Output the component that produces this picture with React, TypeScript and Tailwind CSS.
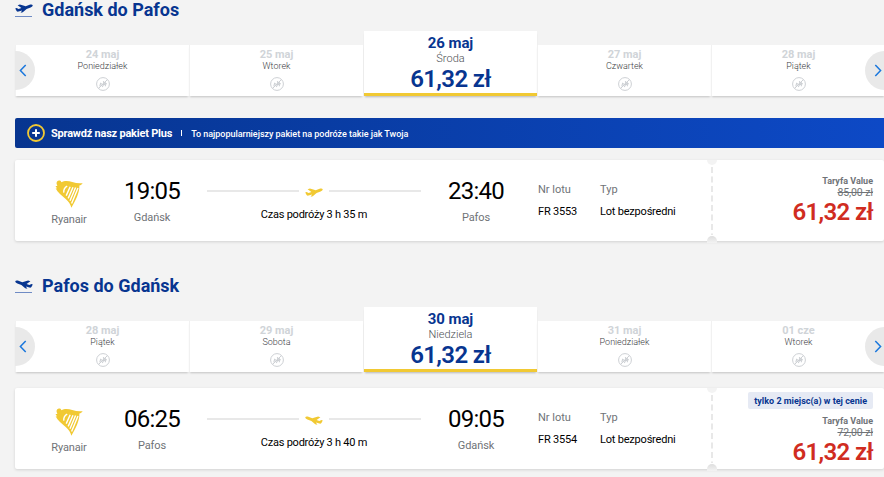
interface Day {
  date: string
  weekday: string
  price?: string
}

interface Flight {
  departure: string
  from: string
  arrival: string
  to: string
  duration: string
  number: string
  oldPrice: string
  price: string
  notice?: string
}

const outboundDays: Day[] = [
  { date: '24 maj', weekday: 'Poniedziałek' },
  { date: '25 maj', weekday: 'Wtorek' },
  { date: '26 maj', weekday: 'Środa', price: '61,32 zł' },
  { date: '27 maj', weekday: 'Czwartek' },
  { date: '28 maj', weekday: 'Piątek' }
]

const returnDays: Day[] = [
  { date: '28 maj', weekday: 'Piątek' },
  { date: '29 maj', weekday: 'Sobota' },
  { date: '30 maj', weekday: 'Niedziela', price: '61,32 zł' },
  { date: '31 maj', weekday: 'Poniedziałek' },
  { date: '01 cze', weekday: 'Wtorek' }
]

const outboundFlight: Flight = {
  departure: '19:05',
  from: 'Gdańsk',
  arrival: '23:40',
  to: 'Pafos',
  duration: 'Czas podróży 3 h 35 m',
  number: 'FR 3553',
  oldPrice: '85,00 zł',
  price: '61,32 zł'
}

const returnFlight: Flight = {
  departure: '06:25',
  from: 'Pafos',
  arrival: '09:05',
  to: 'Gdańsk',
  duration: 'Czas podróży 3 h 40 m',
  number: 'FR 3554',
  oldPrice: '72,00 zł',
  price: '61,32 zł',
  notice: 'tylko 2 miejsc(a) w tej cenie'
}

function Plane({ landing, className }: { landing?: boolean; className: string }) {
  return (
    <svg viewBox="0 0 18 9" className={`${className} ${landing ? '-scale-x-100' : ''}`} fill="currentColor">
      <path d="M0.2 4.6 1.6 4 3.6 5 6.4 4 2.6 1.3 4.9 0.4 10.7 2.2 14.6 0.8C16.1 0.3 17.4 0.5 17.7 1.2 18 2 16.8 2.9 15.6 3.4L11.6 5.1 7.8 8.2 5.6 8.8 7.1 6.5 3.6 7.6C2.6 7.9 2 7.5 1.6 7Z" />
    </svg>
  )
}

function Chevron({ right }: { right?: boolean }) {
  return (
    <svg viewBox="0 0 8 13" className={`w-2 h-[13px] ${right ? '-scale-x-100' : ''}`} fill="none" stroke="currentColor">
      <path d="M6.7 0.9 1.4 6.5 6.7 12.1" strokeWidth="1.5" />
    </svg>
  )
}

function NoFlight() {
  return (
    <svg viewBox="0 0 14 14" className="w-3.5 h-3.5 text-[#cdd0d4]" fill="none" stroke="currentColor">
      <circle cx="7" cy="7" r="6.4" strokeWidth="1" />
      <path d="M2.6 11.4 11.4 2.6" strokeWidth="1" />
      <path d="M3.8 9.3 4.6 6.3 6.3 7.4 10.8 6.6M6.2 10 8 7 7.4 4.2M9.2 4.8 9.4 9.2" strokeWidth="1.1" />
    </svg>
  )
}

function Harp() {
  return (
    <svg viewBox="0 0 28 28" className="w-7 h-7 text-[#f1c933]" fill="currentColor">
      <path d="M3.2 0.8C4.6 0 6.2 0.7 6.3 2.2 9.6 0.4 13.6 0.8 17.2 2 20.7 3.2 24 3.6 27.7 3.2 26.9 4.5 25.6 5 24.4 5.6 24.7 12.9 20.5 20.6 16.4 27.7 15.5 23.9 13.7 21.6 10.7 18.9 7 15.6 2.5 12.5 0.6 8.3L2.1 8.5 0.5 6 2.4 6 1.8 4.4C1.2 3 1.7 1.4 3.2 0.8Z" />
      <path
        d="M12.2 6.2C10 7.4 8.4 9.4 8.8 12.6M15.2 6.8 11.2 15.6M18 7.2 13.2 18.4M20.6 7.6 15 20.8M23 8 16.6 23.4"
        stroke="white"
        strokeWidth="1.4"
        fill="none"
      />
    </svg>
  )
}

function SectionTitle({ title, landing }: { title: string; landing?: boolean }) {
  return (
    <h2 className="flex items-center h-5 text-[#073590]">
      <span className="flex flex-col w-[18px] gap-[3px] mr-[9px]">
        <Plane landing={landing} className="w-[18px] h-[9px]" />
        <span className="h-px w-[17px] bg-[#6f8bc4]" />
      </span>
      <span className="text-[18px] leading-5 font-bold">{title}</span>
    </h2>
  )
}

function DayTabs({ days }: { days: Day[] }) {
  return (
    <div className="relative flex items-end h-[65px] w-[870px]">
      {days.map((day) =>
        day.price ? (
          <div key={day.date} className="w-[174px] h-[65px] pl-px">
            <div className="flex flex-col items-center h-full pt-1 bg-white border-b-[3px] border-[#f1c933] shadow-[0_2px_2px_-1px_rgba(0,0,0,0.25)]">
              <span className="text-[15px] leading-4 font-bold tracking-[-0.1px] text-[#073590]">{day.date}</span>
              <span className="text-[11px] leading-[14px] mt-px font-light text-[#4c5054]">{day.weekday}</span>
              <span className="text-[24px] leading-[27px] font-semibold tracking-[-0.65px] text-[#073590]">{day.price}</span>
            </div>
          </div>
        ) : (
          <div
            key={day.date}
            className="flex flex-col items-center w-[174px] h-[51px] pt-[3px] bg-white border-l border-[#f1f1f1] shadow-[0_2px_2px_-1px_rgba(0,0,0,0.2)]"
          >
            <span className="text-[11px] leading-[13px] font-bold text-[#d0d4d8]">{day.date}</span>
            <span className="text-[9px] leading-[10px] font-light text-[#3c4044] mb-1.5">{day.weekday}</span>
            <NoFlight />
          </div>
        )
      )}
      <button className="absolute left-0 top-5 w-5 h-[39px] pl-1 flex items-center rounded-r-full bg-[#e9e9e9] text-[#1a77dd]">
        <Chevron />
      </button>
      <button className="absolute right-0 top-5 w-5 h-[39px] pr-[3px] flex items-center justify-end rounded-l-full bg-[#e9e9e9] text-[#1a77dd]">
        <Chevron right />
      </button>
    </div>
  )
}

function PlusBanner() {
  return (
    <div className="flex items-center h-[30px] pl-3 rounded-l-xs text-white bg-linear-to-r from-[#073590] to-[#0d49c6]">
      <svg viewBox="0 0 18 18" className="w-[18px] h-[18px] mr-1.5" fill="none">
        <circle cx="9" cy="9" r="8" stroke="#f1c933" strokeWidth="1.8" />
        <path d="M9 5.2v7.6M5.2 9h7.6" stroke="white" strokeWidth="2" />
      </svg>
      <span className="text-[11px] font-bold tracking-[-0.22px] pt-0.5">Sprawdź nasz pakiet Plus</span>
      <span className="w-px h-1.5 mx-[9px] bg-white" />
      <span className="text-[9px] font-medium tracking-[-0.03px] pt-[3px]">To najpopularniejszy pakiet na podróże takie jak Twoja</span>
    </div>
  )
}

function Stop({ time, city }: { time: string; city: string }) {
  return (
    <div className="flex flex-col items-center w-[58px] pt-[17px] whitespace-nowrap">
      <span className="text-[24px] leading-7 font-normal tracking-[-0.8px] text-black">{time}</span>
      <span className="text-[11px] leading-[14px] mt-1.5 tracking-[-0.1px] text-[#6f7377]">{city}</span>
    </div>
  )
}

function Detail({ label, value, className }: { label: string; value: string; className: string }) {
  return (
    <div className={`flex flex-col gap-2 pt-[23px] text-[11px] leading-[14px] whitespace-nowrap ${className}`}>
      <span className="text-[#6f7377]">{label}</span>
      <span className="tracking-[-0.2px] text-black">{value}</span>
    </div>
  )
}

function FlightCard({ flight, landing }: { flight: Flight; landing?: boolean }) {
  return (
    <div className="flex h-[81px] bg-white rounded-xs shadow-[0_1px_3px_rgba(0,0,0,0.14)]">
      <div className="flex flex-col items-center w-[108px] pt-5">
        <Harp />
        <span className="text-[11px] leading-[14px] mt-[5px] tracking-[-0.15px] text-[#6f7377]">Ryanair</span>
      </div>
      <Stop time={flight.departure} city={flight.from} />
      <div className="w-[214px] mx-[26px] pt-[25px]">
        <div className="flex items-center justify-between h-[11px]">
          <span className="w-[92px] h-0.5 bg-[#e8e8e8]" />
          <Plane landing={landing} className="w-[18px] h-[9px] mt-1 text-[#f1c933]" />
          <span className="w-[92px] h-0.5 bg-[#e8e8e8]" />
        </div>
        <p className="mt-3 text-center text-[11px] leading-[14px] tracking-[-0.24px] text-black">{flight.duration}</p>
      </div>
      <Stop time={flight.arrival} city={flight.to} />
      <Detail label="Nr lotu" value={flight.number} className="w-[62px] ml-[33px]" />
      <Detail label="Typ" value="Lot bezpośredni" className="w-[107px]" />
      <div className="flex flex-col items-center justify-between w-2.5 h-[83px]">
        <span className="w-2.5 h-[5px] rounded-b-full bg-[#f3f3f3]" />
        <svg viewBox="0 0 2 68" className="w-0.5 h-[68px]">
          <path d="M1 0V68" stroke="#e8e8e8" strokeWidth="2" strokeDasharray="6 3.5" />
        </svg>
        <span className="w-2.5 h-[7px] rounded-t-full bg-linear-to-b from-[#dedede] to-[#f3f3f3]" />
      </div>
      <div className="flex flex-col items-end flex-1 pr-[11px] whitespace-nowrap">
        {flight.notice ? (
          <span className="h-[17px] mt-1 mb-1.5 px-[6px] text-[9px] leading-[18px] font-bold rounded-xs bg-[#e6eaf4] text-[#073590]">
            {flight.notice}
          </span>
        ) : (
          <span className="h-[15px]" />
        )}
        <span className="text-[9px] leading-3 font-bold text-[#6f7377]">Taryfa Value</span>
        <span className="text-[10.5px] leading-[11px] line-through tracking-[-0.1px] text-[#6f7377]">{flight.oldPrice}</span>
        <span className="text-[24px] leading-7 font-semibold tracking-[-0.65px] text-[#d02c21]">{flight.price}</span>
      </div>
    </div>
  )
}

export default function App() {
  return (
    <main className="w-[884px] h-[477px] pl-[15px] overflow-hidden bg-[#f3f3f3] font-['Roboto','Liberation_Sans',sans-serif]">
      <section className="flex flex-col h-[276px]">
        <SectionTitle title="Gdańsk do Pafos" />
        <div className="mt-[11px]">
          <DayTabs days={outboundDays} />
        </div>
        <div className="mt-[22px]">
          <PlusBanner />
        </div>
        <div className="mt-3">
          <FlightCard flight={outboundFlight} />
        </div>
      </section>
      <section className="flex flex-col">
        <SectionTitle title="Pafos do Gdańsk" landing />
        <div className="mt-[11px]">
          <DayTabs days={returnDays} />
        </div>
        <div className="mt-4">
          <FlightCard flight={returnFlight} landing />
        </div>
      </section>
    </main>
  )
}
